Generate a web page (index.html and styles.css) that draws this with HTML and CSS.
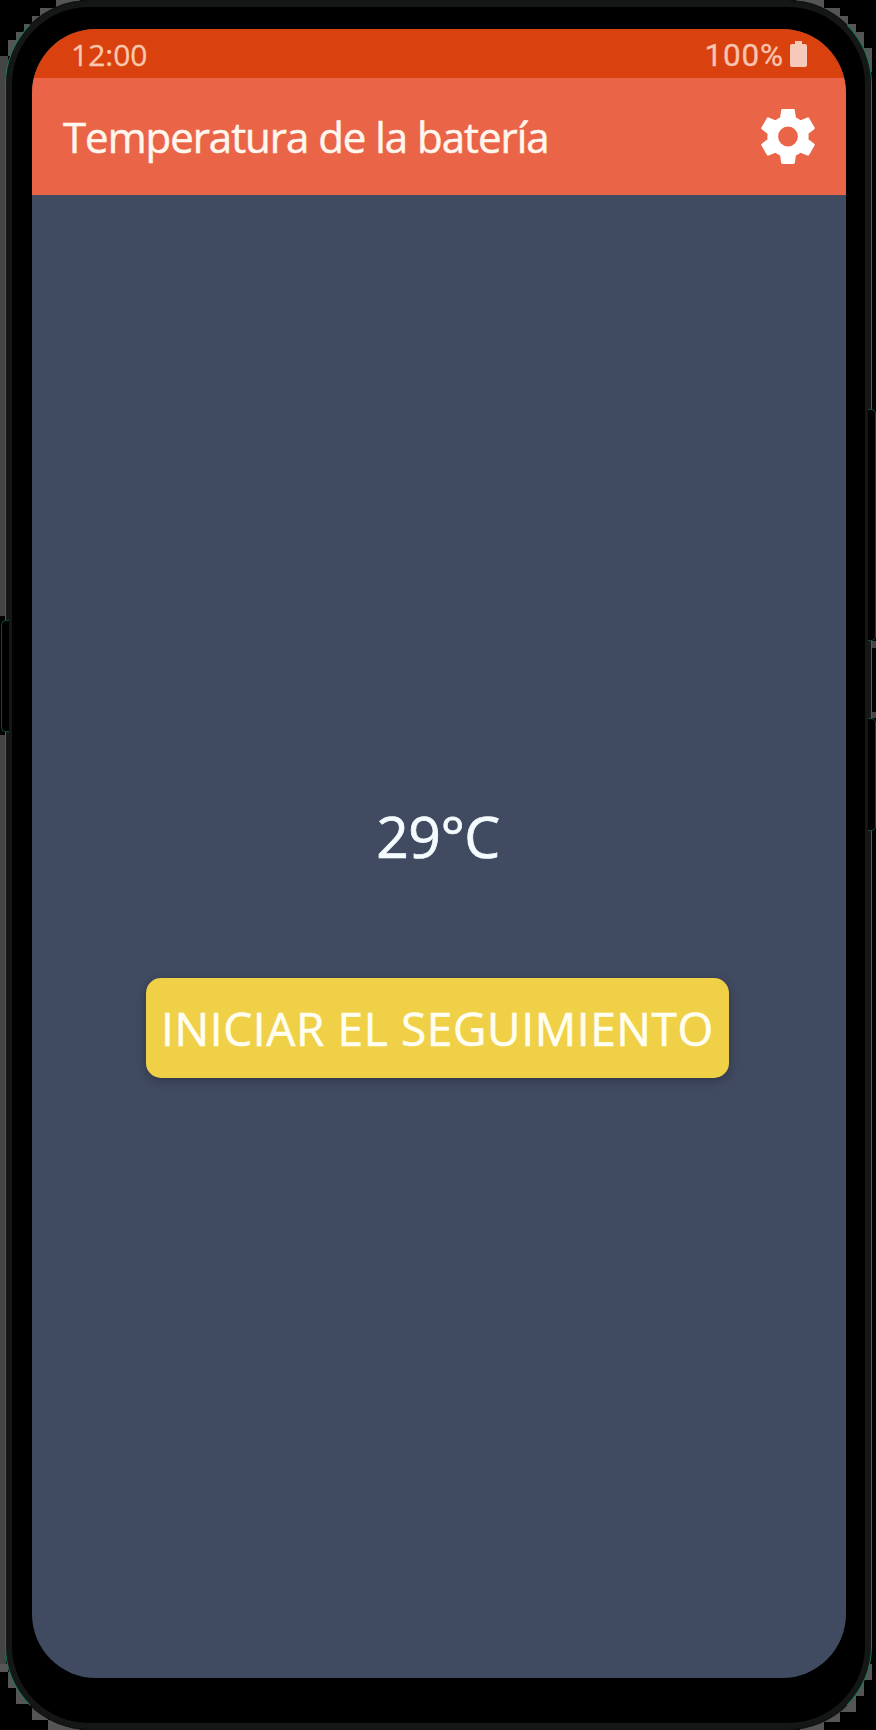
FILE: index.html
```html
<!DOCTYPE html>
<html lang="es">
<head>
<meta charset="utf-8">
<title>Temperatura de la batería</title>
<link rel="stylesheet" href="styles.css">
</head>
<body>
<div class="stage">
  <svg class="edge" viewBox="0 0 876 1730" shape-rendering="crispEdges" aria-hidden="true">
    <path fill="#454545" d="M0 56H8V616H0zM0 735H6V1664H0z"/>
    <path fill="#555" d="M8 40h16v16H8zM16 32h16v16H16zM24 24h16v16H24zM32 16h16v16H32zM40 8h16v16H40zM56 0h24v8H56zM796 0h28v8h-28zM816 8h24v8h-24zM824 16h24v8h-24zM840 24h16v8h-16zM848 32h16v16h-16zM856 48h16v24h-16zM0 1664h8v8H0zM8 1672h16v16H8zM16 1688h16v16H16zM32 1704h16v16H32zM48 1720h32v10H48zM864 1664h8v16h-8zM856 1680h8v16h-8zM840 1696h16v16h-16zM824 1712h16v10h-16zM800 1722h24v8h-24z"/>
    <path fill="#454545" d="M871 641h5v7h-5zM871 712h5v6h-5z"/>
  </svg>
  <div class="key key-left"></div>
  <div class="key key-volume"></div>
  <div class="key key-power"></div>
  <div class="phone">
    <main class="screen">
      <div class="status">
        <span class="clock">12:00</span>
        <span class="charge">100%</span>
        <svg class="battery" viewBox="0 0 17 26"><path d="M5 0h7v3h3q2 0 2 2v19q0 2-2 2H2q-2 0-2-2V5q0-2 2-2h3z"/></svg>
      </div>
      <header class="appbar">
        <h1 class="title">Temperatura de la batería</h1>
        <svg class="gear" viewBox="2.2 2 19.6 20"><path d="M19.43 12.98c.04-.32.07-.64.07-.98s-.03-.66-.07-.98l2.11-1.65c.19-.15.24-.42.12-.64l-2-3.46c-.12-.22-.39-.3-.61-.22l-2.49 1c-.52-.4-1.08-.73-1.69-.98l-.38-2.65C14.46 2.18 14.25 2 14 2h-4c-.25 0-.46.18-.49.42l-.38 2.65c-.61.25-1.17.59-1.69.98l-2.49-1c-.23-.09-.49 0-.61.22l-2 3.46c-.13.22-.07.49.12.64l2.11 1.65c-.04.32-.07.65-.07.98s.03.66.07.98l-2.11 1.65c-.19.15-.24.42-.12.64l2 3.46c.12.22.39.3.61.22l2.49-1c.52.4 1.08.73 1.69.98l.38 2.65c.03.24.24.42.49.42h4c.25 0 .46-.18.49-.42l.38-2.65c.61-.25 1.17-.59 1.69-.98l2.49 1c.23.09.49 0 .61-.22l2-3.46c.12-.22.07-.49-.12-.64zM12 15.6A3.6 3.6 0 1 1 12 8.4a3.6 3.6 0 0 1 0 7.2z"/></svg>
      </header>
      <section class="content">
        <div class="reading">29°C</div>
        <button class="start">INICIAR EL SEGUIMIENTO</button>
      </section>
    </main>
  </div>
</div>
</body>
</html>
```
FILE: styles.css
```css
* { box-sizing: border-box; }
body { margin: 0; background: #000; }
.stage { position: relative; width: 876px; height: 1730px; padding: 0 4px 0 5px; overflow: hidden; }
.edge { position: absolute; inset: 0; width: 876px; height: 1730px; }
.phone { position: relative; height: 1730px; padding: 28px 25px 51px 26px; background: #000; border: 1px solid #1d7a54; border-top-color: #151716; border-bottom-color: #151716; border-radius: 84px; box-shadow: inset 0 0 0 6px #151716; }
.key { position: absolute; z-index: 1; background: #000; border: 1px solid #124e32; }
.key-left { left: 1px; top: 620px; width: 8px; height: 112px; border-right: 0; border-radius: 5px 0 0 5px; }
.key-volume { left: 868px; top: 409px; width: 8px; height: 232px; border-left: 0; border-radius: 0 5px 5px 0; }
.key-power { left: 868px; top: 718px; width: 8px; height: 113px; border-left: 0; border-radius: 0 5px 5px 0; }
.screen { height: 1649px; border-radius: 64px; overflow: hidden; background: #404a60; font-family: "Open Sans", "Noto Sans", sans-serif; display: flex; flex-direction: column; }
.status { height: 49px; flex: none; background: #d9420e; color: #fbc7ae; display: flex; align-items: center; padding: 2px 39px 0 39px; font-size: 30px; line-height: 47px; -webkit-text-stroke: .3px currentColor; }
.clock { flex: 1; }
.charge { font-family: Roboto, sans-serif; font-size: 31.5px; letter-spacing: .8px; color: #f6c4b1; margin-right: 6px; padding-top: 2px; }
.battery { width: 17px; height: 26px; margin-bottom: 2px; fill: #f5cabb; }
.appbar { height: 117px; flex: none; background: #ea6447; display: flex; align-items: center; justify-content: space-between; padding: 0 31px; }
.title { margin: 0; font-size: 42px; font-weight: 400; line-height: 60px; letter-spacing: -1.03px; color: #fff6ee; -webkit-text-stroke: .5px currentColor; }
.gear { width: 54px; height: 55px; fill: #fff; }
.content { flex: 1; display: flex; flex-direction: column; align-items: center; padding-top: 601px; }
.reading { height: 80px; line-height: 80px; font-size: 57px; letter-spacing: -.5px; margin-right: 2px; color: #f5fcff; -webkit-text-stroke: .7px currentColor; }
.start { margin-top: 102px; margin-right: 3px; width: 583px; height: 100px; padding: 1px 0 0; border: 0; border-radius: 15px; background: #efd047; color: #fffef0; font: 46px/99px "Open Sans", "Noto Sans", sans-serif; letter-spacing: .62px; white-space: nowrap; box-shadow: 0 3px 8px rgba(25, 30, 42, .4); -webkit-text-stroke: .6px currentColor; }
```
